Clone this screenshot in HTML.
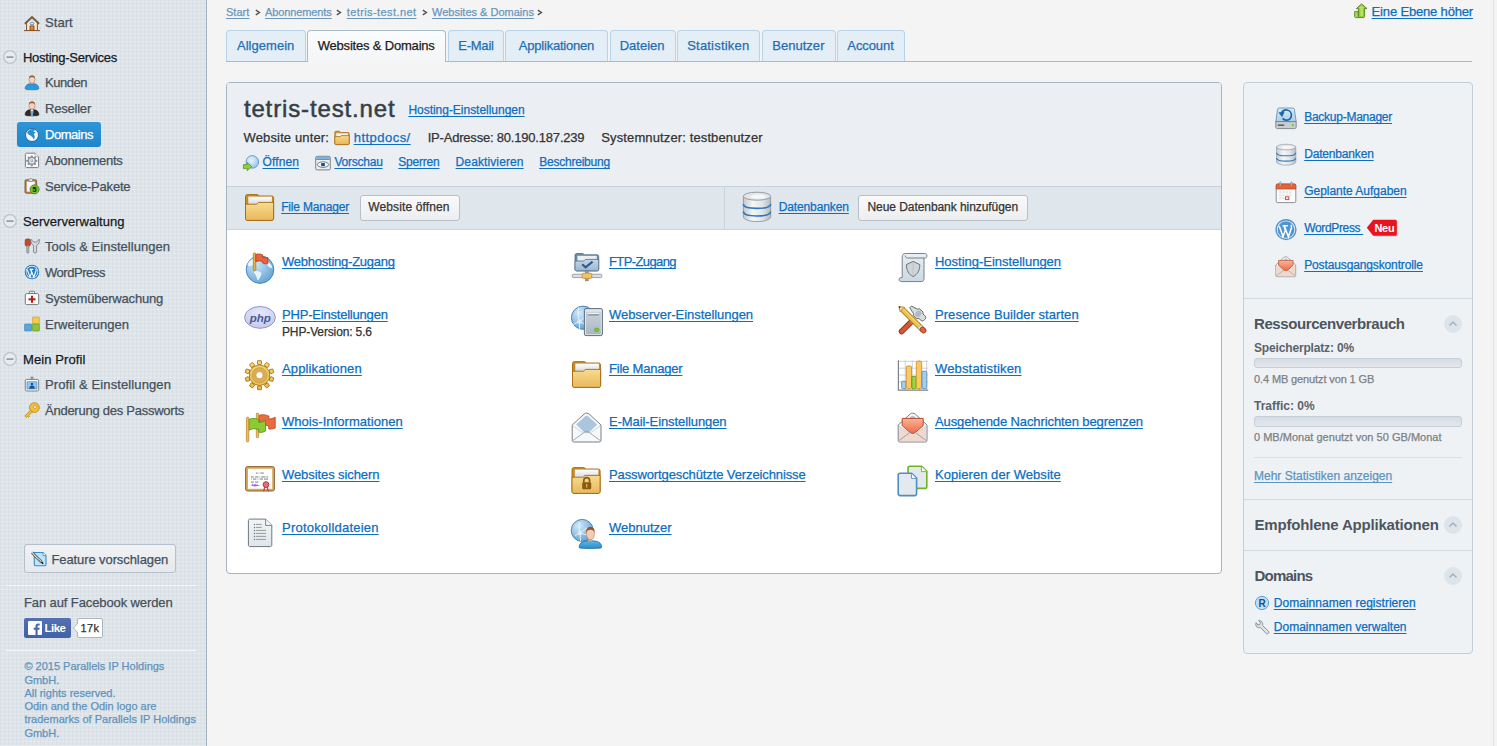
<!DOCTYPE html>
<html><head><meta charset="utf-8"><style>
html,body{margin:0;padding:0;}
body{width:1497px;height:746px;overflow:hidden;position:relative;background:#f4f4f4;font-family:"Liberation Sans",sans-serif;}
.t{position:absolute;white-space:nowrap;line-height:1;-webkit-text-stroke:0.25px;text-underline-offset:1.5px;text-decoration-skip-ink:none;}
.r{position:absolute;}
.ic16{position:absolute;width:16px;height:16px;}
.ic22{position:absolute;width:22px;height:22px;}
.ic32{position:absolute;width:32px;height:32px;}
.ic16 svg,.ic22 svg,.ic32 svg{display:block;overflow:visible;}
</style></head><body>
<div class="r" style="left:0px;top:0px;width:206px;height:746px;background-color:#dee4e8;background-image:repeating-linear-gradient(0deg,rgba(255,255,255,0.22) 0 1px,transparent 1px 4px),repeating-linear-gradient(90deg,rgba(160,175,190,0.10) 0 1px,transparent 1px 4px);"></div>
<div class="r" style="left:206px;top:0px;width:1px;height:746px;background:#a3b2bf;"></div>
<div class="t" style="left:45.0px;top:16.20px;font-size:13px;color:#44505b;letter-spacing:0.069px;">Start</div>
<div class="ic16" style="left:24px;top:14.5px"><svg width="16" height="16" viewBox="0 0 16 16">
<rect x="2.2" y="7" width="11.6" height="8.2" fill="#fbf1da"/>
<path d="M2.6 7.5V15M13.4 7.5V15" stroke="#7d5b3d" stroke-width="1.1"/>
<path d="M8 0.8 L0.2 8 L1.6 9.4 L8 3.4 L14.4 9.4 L15.8 8 Z" fill="#7d5b3d"/>
<rect x="0" y="15" width="16" height="1.1" fill="#7d5b3d"/>
<rect x="6.2" y="7.6" width="3.6" height="2.2" rx="1" fill="#fff" stroke="#3f7db8" stroke-width="1"/>
<rect x="6" y="11" width="4" height="4.2" fill="#d7932e" stroke="#9a3d10" stroke-width="0.9"/>
</svg></div>
<svg class="r" style="left:3px;top:50px" width="14" height="14"><circle cx="7" cy="7" r="6.3" fill="#e6ebef" stroke="#b8c3cc" stroke-width="1.2"/><rect x="3.5" y="6.3" width="7" height="1.6" fill="#8c98a3"/></svg>
<div class="t" style="left:23.0px;top:51.00px;font-size:13px;color:#15191d;letter-spacing:-0.266px;letter-spacing:-0.266px;">Hosting-Services</div>
<div class="t" style="left:45.0px;top:76.00px;font-size:13px;color:#44505b;letter-spacing:-0.470px;">Kunden</div>
<div class="ic16" style="left:24px;top:74px"><svg width="16" height="16" viewBox="0 0 16 16">
<path d="M1.2 14.5 C1.2 10.8 4.5 9.5 8 9.5 C11.5 9.5 14.8 10.8 14.8 14.5 C14.8 15.6 13.5 15.8 8 15.8 C2.5 15.8 1.2 15.6 1.2 14.5Z" fill="#2f97d6" stroke="#1d6fae" stroke-width="0.6"/>
<rect x="7" y="8" width="2" height="2" fill="#eab391"/>
<ellipse cx="8" cy="5.6" rx="3" ry="3.7" fill="#f6d3bd" stroke="#b87a55" stroke-width="0.6"/>
<path d="M5 4.8 C5 2 6.5 1.6 8 1.6 C9.5 1.6 11 2 11 4.8 C10.4 3.6 9.8 3.4 8 3.3 C6.3 3.4 5.6 3.6 5 4.8Z" fill="#9a5a2e"/>
</svg></div>
<div class="t" style="left:45.0px;top:102.00px;font-size:13px;color:#44505b;letter-spacing:-0.210px;">Reseller</div>
<div class="ic16" style="left:24px;top:100px"><svg width="16" height="16" viewBox="0 0 16 16">
<path d="M1.2 14.5 C1.2 10.8 4.5 9.5 8 9.5 C11.5 9.5 14.8 10.8 14.8 14.5 C14.8 15.6 13.5 15.8 8 15.8 C2.5 15.8 1.2 15.6 1.2 14.5Z" fill="#2b2b2b" stroke="#111" stroke-width="0.6"/>
<path d="M6.6 9.6 L9.4 9.6 L9 15.6 L7 15.6Z" fill="#fff"/>
<rect x="7.3" y="10.8" width="1.4" height="4.6" fill="#2f86c9"/>
<rect x="7" y="8" width="2" height="2" fill="#eab391"/>
<ellipse cx="8" cy="5.6" rx="3" ry="3.7" fill="#f6d3bd" stroke="#b87a55" stroke-width="0.6"/>
<path d="M5 4.8 C5 2 6.5 1.6 8 1.6 C9.5 1.6 11 2 11 4.8 C10.4 3.6 9.8 3.4 8 3.3 C6.3 3.4 5.6 3.6 5 4.8Z" fill="#9a5a2e"/>
</svg></div>
<div class="r" style="left:17px;top:122px;width:84px;height:25px;background:linear-gradient(#2f95d8,#1f86cc);border-radius:3px;"></div>
<div class="t" style="left:45.0px;top:128.00px;font-size:13px;color:#ffffff;letter-spacing:-0.471px;">Domains</div>
<div class="ic16" style="left:24px;top:126px"><svg width="16" height="16" viewBox="0 0 16 16">
<circle cx="8" cy="9" r="6.5" fill="#f4f9fd" stroke="#1f5f93" stroke-width="0.9"/>
<path d="M3.2 6.4 C4.5 4 7 2.9 10 3 C11.2 3.4 11.5 4.2 10.5 4.6 C9.5 4.9 9 5.6 10.2 6 C11.5 6.3 12.4 6.6 11 7.2 C9.8 7.6 9.6 8.4 10.4 9.2 C11 10.4 10.8 12 9.8 13.6 C9.2 12.4 8.6 11 7.6 10.6 C6.5 10 6.3 9 5.2 8.8 C4.2 8.6 3.6 7.6 3.2 6.4Z" fill="#2a8dd4"/>
</svg></div>
<div class="t" style="left:45.0px;top:154.00px;font-size:13px;color:#44505b;letter-spacing:-0.238px;">Abonnements</div>
<div class="ic16" style="left:24px;top:152px"><svg width="16" height="16" viewBox="0 0 16 16">
<path d="M1.4 2.4 C1.4 1.7 1.9 1.2 2.6 1.2 H11.2 L14.6 4.6 V14.4 C14.6 15.1 14.1 15.6 13.4 15.6 H2.6 C1.9 15.6 1.4 15.1 1.4 14.4Z" fill="#fafafa" stroke="#767e85" stroke-width="1"/>
<path d="M11.2 1.3 V4.6 H14.5" fill="#fff" stroke="#9aa1a7" stroke-width="0.7"/>
<g transform="translate(7.8 8.8)">
<g fill="#8a9197">
<rect x="-1.1" y="-5.4" width="2.2" height="10.8" rx="0.5"/>
<rect x="-1.1" y="-5.4" width="2.2" height="10.8" rx="0.5" transform="rotate(45)"/>
<rect x="-1.1" y="-5.4" width="2.2" height="10.8" rx="0.5" transform="rotate(90)"/>
<rect x="-1.1" y="-5.4" width="2.2" height="10.8" rx="0.5" transform="rotate(135)"/>
<circle r="4"/></g>
<circle r="2.8" fill="#e9ecee"/>
<circle r="1.4" fill="#8a9197"/>
<circle r="0.7" fill="#fafafa"/>
</g>
</svg></div>
<div class="t" style="left:45.0px;top:180.00px;font-size:13px;color:#44505b;letter-spacing:-0.196px;">Service-Pakete</div>
<div class="ic16" style="left:24px;top:178px"><svg width="16" height="16" viewBox="0 0 16 16">
<rect x="1" y="1.8" width="11.6" height="13.4" rx="1.2" fill="#c08a4c" stroke="#6f4a22" stroke-width="0.8"/>
<rect x="2.8" y="3.6" width="8" height="10" fill="#f7f9fb"/>
<rect x="4.8" y="0.8" width="4" height="2.6" rx="1" fill="#f2f2f2" stroke="#555" stroke-width="0.6"/>
<circle cx="10.6" cy="11.3" r="4.5" fill="#8cc63f" stroke="#3f7a12" stroke-width="0.8"/>
<circle cx="10.6" cy="11.3" r="3.2" fill="#6db02a"/>
<text x="10.6" y="13.9" font-size="7.2" font-weight="bold" text-anchor="middle" fill="#0f2a05" font-family="Liberation Sans">5</text>
</svg></div>
<svg class="r" style="left:3px;top:214px" width="14" height="14"><circle cx="7" cy="7" r="6.3" fill="#e6ebef" stroke="#b8c3cc" stroke-width="1.2"/><rect x="3.5" y="6.3" width="7" height="1.6" fill="#8c98a3"/></svg>
<div class="t" style="left:23.0px;top:215.20px;font-size:13px;color:#15191d;letter-spacing:0.022px;letter-spacing:0.022px;">Serververwaltung</div>
<div class="t" style="left:45.0px;top:240.30px;font-size:13px;color:#44505b;letter-spacing:0.034px;">Tools &amp; Einstellungen</div>
<div class="ic16" style="left:24px;top:238px"><svg width="16" height="16" viewBox="0 0 16 16">
<rect x="1.2" y="1" width="5.2" height="7" rx="1.6" fill="#c9482a" stroke="#7e2510" stroke-width="0.6"/>
<rect x="2.7" y="7.6" width="2.2" height="7.6" rx="0.8" fill="#a9b0b6" stroke="#6c747b" stroke-width="0.5"/>
<path d="M7 1.2 C6.4 4 7.4 6.6 9.6 7.4 V14 C9.6 15.4 12.6 15.4 12.6 14 V7.4 C14.8 6.6 15.8 4 15.2 1.2 L13.2 3.6 C12.4 4.2 9.8 4.2 9 3.6 Z" fill="#d5dadf" stroke="#6f787f" stroke-width="0.8"/>
</svg></div>
<div class="t" style="left:45.0px;top:266.00px;font-size:13px;color:#44505b;letter-spacing:-0.451px;">WordPress</div>
<div class="ic16" style="left:24px;top:264px"><svg width="16" height="16" viewBox="0 0 16 16">
<circle cx="8" cy="8" r="7.3" fill="#2a7ec2"/>
<circle cx="8" cy="8" r="6.2" fill="#fff"/>
<circle cx="8" cy="8" r="5.6" fill="#2a7ec2"/>
<path d="M3.2 5.6 L6 13 L7.6 8.6 L6.6 5.6 M6.9 5.6 L9.8 13.1 L12 7 C12.3 5.8 12 5.2 11.6 4.8 M5.6 5.4 H9.2" fill="none" stroke="#fff" stroke-width="1.1"/>
</svg></div>
<div class="t" style="left:45.0px;top:292.00px;font-size:13px;color:#44505b;letter-spacing:-0.200px;">Systemüberwachung</div>
<div class="ic16" style="left:24px;top:290px"><svg width="16" height="16" viewBox="0 0 16 16">
<rect x="5.4" y="1.2" width="5.2" height="2.6" rx="0.8" fill="none" stroke="#737b82" stroke-width="0.9"/>
<rect x="1.3" y="3.6" width="13.4" height="11" rx="1.4" fill="#fbfbfb" stroke="#737b82" stroke-width="1"/>
<rect x="7" y="5.8" width="2" height="7" fill="#b81d1d"/>
<rect x="4.5" y="8.3" width="7" height="2" fill="#b81d1d"/>
</svg></div>
<div class="t" style="left:45.0px;top:318.00px;font-size:13px;color:#44505b;letter-spacing:0.013px;">Erweiterungen</div>
<div class="ic16" style="left:24px;top:316px"><svg width="16" height="16" viewBox="0 0 16 16">
<rect x="0.6" y="8" width="7" height="7" rx="0.6" fill="#5aa5dd" stroke="#3e7eae" stroke-width="0.6"/>
<rect x="8.4" y="1" width="7" height="7" rx="0.6" fill="#f5c94a" stroke="#c99a25" stroke-width="0.6"/>
<rect x="8.4" y="8" width="7" height="7" rx="0.6" fill="#8cc43e" stroke="#5f9223" stroke-width="0.6"/>
</svg></div>
<svg class="r" style="left:3px;top:352px" width="14" height="14"><circle cx="7" cy="7" r="6.3" fill="#e6ebef" stroke="#b8c3cc" stroke-width="1.2"/><rect x="3.5" y="6.3" width="7" height="1.6" fill="#8c98a3"/></svg>
<div class="t" style="left:23.0px;top:352.70px;font-size:13px;color:#15191d;letter-spacing:0.099px;letter-spacing:0.099px;">Mein Profil</div>
<div class="t" style="left:45.0px;top:378.00px;font-size:13px;color:#44505b;letter-spacing:0.111px;">Profil &amp; Einstellungen</div>
<div class="ic16" style="left:24px;top:376px"><svg width="16" height="16" viewBox="0 0 16 16">
<rect x="6.6" y="0.6" width="2.8" height="3" fill="#8c949b"/>
<rect x="1.3" y="3.4" width="13.4" height="11.6" rx="1.6" fill="#fafafa" stroke="#7c848b" stroke-width="1"/>
<rect x="3" y="5.8" width="10" height="7.2" fill="#8cc7f0" stroke="#3a84c4" stroke-width="0.6"/>
<circle cx="8" cy="8" r="1.2" fill="#1f4e8c"/>
<path d="M5.3 12.8 C5.3 10.5 6.3 9.6 8 9.6 C9.7 9.6 10.7 10.5 10.7 12.8Z" fill="#1f4e8c"/>
</svg></div>
<div class="t" style="left:45.0px;top:404.00px;font-size:13px;color:#44505b;letter-spacing:-0.251px;">Änderung des Passworts</div>
<div class="ic16" style="left:24px;top:402px"><svg width="16" height="16" viewBox="0 0 16 16">
<circle cx="10.4" cy="5.6" r="4.9" fill="#f2bf3a" stroke="#b9831a" stroke-width="0.8"/>
<circle cx="11" cy="5" r="1.5" fill="#f2f2f2" stroke="#b9831a" stroke-width="0.6"/>
<path d="M6.6 8.2 L0.8 14 L2.4 15.6 L3.6 14.4 L4.6 15.2 L5.6 14.2 L4.8 13.4 L8.6 9.6Z" fill="#f2bf3a" stroke="#b9831a" stroke-width="0.8"/>
</svg></div>
<div class="r" style="left:24px;top:544px;width:150px;height:27px;background:linear-gradient(#f0f2f4,#e6e9ec);border:1px solid #b3bfc9;border-radius:3px;"></div>
<div class="t" style="left:51.4px;top:552.50px;font-size:13px;color:#44505b;letter-spacing:-0.090px;">Feature vorschlagen</div>
<div class="ic16" style="left:31px;top:551px"><svg width="16" height="16" viewBox="0 0 16 16">
<path d="M3.3 1.5 H12 L15 4.5 V13.4 C15 14.3 14.4 14.8 13.6 14.8 H4.6 C3.8 14.8 3.3 14.3 3.3 13.4Z" fill="#bfe3fb" stroke="#3b8cc9" stroke-width="1.1"/>
<path d="M12 1.6 V4.6 H15" fill="#fff" stroke="#3b8cc9" stroke-width="0.8"/>
<path d="M1 1.5 L10.6 11.2" stroke="#55595e" stroke-width="3"/>
<path d="M1 1.5 L10.6 11.2" stroke="#f4f4f4" stroke-width="1.6" stroke-dasharray="1 0.6"/>
<path d="M10.3 10.9 L12.2 12.8" stroke="#111" stroke-width="1.4"/>
</svg></div>
<div class="r" style="left:6px;top:585px;width:190px;height:1px;background:#f6f8fa;"></div>
<div class="t" style="left:24.0px;top:596.20px;font-size:13px;color:#44505b;letter-spacing:-0.110px;">Fan auf Facebook werden</div>
<div class="r" style="left:24px;top:618px;width:47px;height:20px;background:linear-gradient(#5370b3,#4162a6);border-radius:2px;"></div>
<svg class="r" style="left:28px;top:621px" width="14" height="14"><rect width="14" height="14" rx="1" fill="#fff"/><path d="M9.6 14V8.8h1.8l.3-2H9.6V5.5c0-.6.2-1 1-1h1.1V2.7c-.2 0-.9-.1-1.6-.1-1.6 0-2.6 1-2.6 2.7v1.5H5.7v2h1.8V14z" fill="#4a67ab"/></svg>
<div class="t" style="left:44.5px;top:622.77px;font-size:11.5px;color:#fff;letter-spacing:-0.503px;font-weight:bold;-webkit-text-stroke:0;">Like</div>
<div class="r" style="left:77px;top:618px;width:24px;height:18px;background:#fff;border:1px solid #aeb6bf;border-radius:2px;"></div>
<svg class="r" style="left:73px;top:623px" width="6" height="10"><path d="M5 0 L0.5 5 L5 10" fill="#fff" stroke="#aeb6bf"/></svg>
<div class="t" style="left:80.5px;top:622.99px;font-size:11px;color:#333;letter-spacing:0.422px;">17k</div>
<div class="r" style="left:6px;top:650px;width:190px;height:1px;background:#f6f8fa;"></div>
<div class="t" style="left:24.4px;top:661.49px;font-size:11px;color:#5f93bd;">© 2015 Parallels IP Holdings</div>
<div class="t" style="left:24.4px;top:674.59px;font-size:11px;color:#5f93bd;">GmbH.</div>
<div class="t" style="left:24.4px;top:687.89px;font-size:11px;color:#5f93bd;">All rights reserved.</div>
<div class="t" style="left:24.4px;top:701.09px;font-size:11px;color:#5f93bd;">Odin and the Odin logo are</div>
<div class="t" style="left:24.4px;top:714.49px;font-size:11px;color:#5f93bd;">trademarks of Parallels IP Holdings</div>
<div class="t" style="left:24.4px;top:727.69px;font-size:11px;color:#5f93bd;">GmbH.</div>
<div class="t" style="left:226.0px;top:6.69px;font-size:11px;color:#6a97bb;letter-spacing:0.034px;text-decoration:underline;">Start</div>
<svg class="r" style="left:254.5px;top:9px" width="6" height="7"><path d="M0.8 1.2 L4.4 3.5 L0.8 5.8" fill="none" stroke="#505050" stroke-width="1.4"/></svg>
<div class="t" style="left:265.0px;top:6.69px;font-size:11px;color:#6a97bb;letter-spacing:-0.107px;text-decoration:underline;">Abonnements</div>
<svg class="r" style="left:335.9px;top:9px" width="6" height="7"><path d="M0.8 1.2 L4.4 3.5 L0.8 5.8" fill="none" stroke="#505050" stroke-width="1.4"/></svg>
<div class="t" style="left:346.7px;top:6.69px;font-size:11px;color:#6a97bb;letter-spacing:0.415px;text-decoration:underline;">tetris-test.net</div>
<svg class="r" style="left:421.8px;top:9px" width="6" height="7"><path d="M0.8 1.2 L4.4 3.5 L0.8 5.8" fill="none" stroke="#505050" stroke-width="1.4"/></svg>
<div class="t" style="left:432.0px;top:6.69px;font-size:11px;color:#6a97bb;text-decoration:underline;">Websites &amp; Domains</div>
<svg class="r" style="left:537.0px;top:9px" width="6" height="7"><path d="M0.8 1.2 L4.4 3.5 L0.8 5.8" fill="none" stroke="#505050" stroke-width="1.4"/></svg>
<div class="ic16" style="left:1353px;top:3px"><svg width="16" height="16" viewBox="0 0 16 16">
<path d="M1.6 8.6 H5.4 V14.6 H2.6 C2 14.6 1.6 14.2 1.6 13.6Z" fill="#a6d65a" stroke="#557f1c" stroke-width="0.8"/>
<path d="M8.5 0.9 L14 5.6 H11.6 V13.4 C11.6 14.1 11.1 14.6 10.4 14.6 H5.4 V5.6 H3.4Z" fill="#93cb3a" stroke="#557f1c" stroke-width="0.9"/>
<path d="M8.5 2.5 L11.2 5 H9.8 V13 H7.4 V5 H6 Z" fill="#b9e46c"/>
</svg></div>
<div class="t" style="left:1371.6px;top:5.10px;font-size:13px;color:#0b6ec1;letter-spacing:-0.167px;text-decoration:underline;">Eine Ebene höher</div>
<div class="r" style="left:226px;top:61px;width:1246px;height:1px;background:#a9bbc9;"></div>
<div class="r" style="left:226px;top:30px;width:78px;height:30px;background:#e4eef6;border:1px solid #b8d2e8;border-bottom:none;border-radius:4px 4px 0 0;"></div>
<div class="t" style="left:237.0px;top:39.40px;font-size:13px;color:#1f6db3;letter-spacing:0.024px;">Allgemein</div>
<div class="r" style="left:307px;top:30px;width:137px;height:31px;background:linear-gradient(#fbfcfd,#f4f5f6);border:1px solid #a9bbc9;border-bottom:none;border-radius:4px 4px 0 0;"></div>
<div class="t" style="left:317.7px;top:39.40px;font-size:13px;color:#1d1d1d;letter-spacing:-0.190px;">Websites &amp; Domains</div>
<div class="r" style="left:448px;top:30px;width:54px;height:30px;background:#e4eef6;border:1px solid #b8d2e8;border-bottom:none;border-radius:4px 4px 0 0;"></div>
<div class="t" style="left:458.2px;top:39.40px;font-size:13px;color:#1f6db3;letter-spacing:-0.215px;">E-Mail</div>
<div class="r" style="left:505px;top:30px;width:101px;height:30px;background:#e4eef6;border:1px solid #b8d2e8;border-bottom:none;border-radius:4px 4px 0 0;"></div>
<div class="t" style="left:518.8px;top:39.40px;font-size:13px;color:#1f6db3;letter-spacing:-0.210px;">Applikationen</div>
<div class="r" style="left:610px;top:30px;width:64px;height:30px;background:#e4eef6;border:1px solid #b8d2e8;border-bottom:none;border-radius:4px 4px 0 0;"></div>
<div class="t" style="left:619.7px;top:39.40px;font-size:13px;color:#1f6db3;letter-spacing:-0.001px;">Dateien</div>
<div class="r" style="left:677px;top:30px;width:81px;height:30px;background:#e4eef6;border:1px solid #b8d2e8;border-bottom:none;border-radius:4px 4px 0 0;"></div>
<div class="t" style="left:687.2px;top:39.40px;font-size:13px;color:#1f6db3;letter-spacing:0.203px;">Statistiken</div>
<div class="r" style="left:762px;top:30px;width:72px;height:30px;background:#e4eef6;border:1px solid #b8d2e8;border-bottom:none;border-radius:4px 4px 0 0;"></div>
<div class="t" style="left:772.2px;top:39.40px;font-size:13px;color:#1f6db3;letter-spacing:0.034px;">Benutzer</div>
<div class="r" style="left:837px;top:30px;width:66px;height:30px;background:#e4eef6;border:1px solid #b8d2e8;border-bottom:none;border-radius:4px 4px 0 0;"></div>
<div class="t" style="left:847.3px;top:39.40px;font-size:13px;color:#1f6db3;letter-spacing:-0.082px;">Account</div>
<div class="r" style="left:226px;top:82px;width:994px;height:490px;background:#fff;border:1px solid #a5b4c0;border-radius:4px;overflow:hidden;"></div>
<div class="r" style="left:227px;top:83px;width:994px;height:103px;background:#ebeff3;border-radius:3px 3px 0 0;"></div>
<div class="r" style="left:227px;top:186px;width:994px;height:1px;background:#c9d3db;"></div>
<div class="r" style="left:227px;top:187px;width:994px;height:42px;background:#dfe6ec;"></div>
<div class="r" style="left:227px;top:229px;width:994px;height:1px;background:#cbd4dc;"></div>
<div class="r" style="left:724px;top:187px;width:1px;height:42px;background:#c9d3db;"></div>
<div class="t" style="left:243.9px;top:96.58px;font-size:24px;color:#353e47;letter-spacing:0.858px;-webkit-text-stroke:0.5px;">tetris-test.net</div>
<div class="t" style="left:408.4px;top:104.14px;font-size:12px;color:#0b6ec1;letter-spacing:-0.025px;text-decoration:underline;">Hosting-Einstellungen</div>
<div class="t" style="left:243.6px;top:130.60px;font-size:13px;color:#333;letter-spacing:0.130px;">Website unter:</div>
<div class="ic16" style="left:334px;top:130px"><svg width="16" height="16" viewBox="0 0 16 16"><defs><linearGradient id="gfold" x1="0" y1="0" x2="0" y2="1"><stop offset="0" stop-color="#f6d98a"/><stop offset="1" stop-color="#e7b659"/></linearGradient></defs>
<path d="M0.8 2.4 C0.8 1.7 1.2 1.3 1.9 1.3 H5.6 L6.5 2.5 H14 C14.7 2.5 15.2 2.9 15.2 3.6 V13.4 C15.2 14.1 14.7 14.6 14 14.6 H2 C1.3 14.6 0.8 14.1 0.8 13.4Z" fill="#d39b3a" stroke="#a86f16" stroke-width="0.8"/>
<rect x="2.2" y="3.3" width="11.8" height="4.5" fill="#eef1f4"/>
<path d="M0.8 6.6 H6.4 L7.2 5.6 H15.2 V13.4 C15.2 14.1 14.7 14.6 14 14.6 H2 C1.3 14.6 0.8 14.1 0.8 13.4Z" fill="url(#gfold)" stroke="#a86f16" stroke-width="0.8"/>
</svg></div>
<div class="t" style="left:353.7px;top:130.60px;font-size:13px;color:#0b6ec1;letter-spacing:0.472px;text-decoration:underline;">httpdocs/</div>
<div class="t" style="left:427.7px;top:130.60px;font-size:13px;color:#333;letter-spacing:-0.200px;">IP-Adresse: 80.190.187.239</div>
<div class="t" style="left:601.3px;top:130.60px;font-size:13px;color:#333;letter-spacing:0.121px;">Systemnutzer: testbenutzer</div>
<div class="ic16" style="left:243px;top:155px"><svg width="16" height="16" viewBox="0 0 16 16">
<defs><radialGradient id="gglob" cx="0.4" cy="0.35" r="0.7"><stop offset="0" stop-color="#e9f5fd"/><stop offset="1" stop-color="#8fc3e9"/></radialGradient></defs>
<circle cx="9.3" cy="6.9" r="6.3" fill="url(#gglob)" stroke="#4f8fc2" stroke-width="0.8"/>
<path d="M7 4.5 C8.5 3.8 10.5 4 11.5 5 M8.5 8 C9.5 7.6 11 7.8 12 8.5" stroke="#cfe6f6" stroke-width="0.8" fill="none"/>
<path d="M0.4 9.6 H4.2 V7.4 L8.8 11.6 L4.2 15.8 V13.6 H0.4Z" fill="#8fcf37" stroke="#4f8a1c" stroke-width="0.7"/>
</svg></div>
<div class="t" style="left:262.5px;top:155.64px;font-size:12px;color:#0b6ec1;letter-spacing:0.116px;text-decoration:underline;">Öffnen</div>
<div class="ic16" style="left:315px;top:155px"><svg width="16" height="16" viewBox="0 0 16 16">
<rect x="0.7" y="1.3" width="14.6" height="13.6" rx="1.4" fill="#eceff2" stroke="#6e767d" stroke-width="0.9"/>
<rect x="1.3" y="1.8" width="13.4" height="2.4" fill="#74b4e6"/>
<rect x="1.3" y="4.2" width="13.4" height="0.8" fill="#6e767d"/>
<ellipse cx="8" cy="9.6" rx="5.6" ry="2.8" fill="#f8f8f8" stroke="#5b636a" stroke-width="0.8"/>
<rect x="6" y="8" width="4" height="3.2" fill="#2f6fb0"/>
<rect x="7.2" y="8.8" width="1.6" height="1.6" fill="#1a2f4a"/>
</svg></div>
<div class="t" style="left:334.4px;top:155.64px;font-size:12px;color:#0b6ec1;letter-spacing:-0.229px;text-decoration:underline;">Vorschau</div>
<div class="t" style="left:398.3px;top:155.64px;font-size:12px;color:#0b6ec1;letter-spacing:-0.213px;text-decoration:underline;">Sperren</div>
<div class="t" style="left:455.6px;top:155.64px;font-size:12px;color:#0b6ec1;letter-spacing:0.109px;text-decoration:underline;">Deaktivieren</div>
<div class="t" style="left:539.2px;top:155.64px;font-size:12px;color:#0b6ec1;letter-spacing:-0.223px;text-decoration:underline;">Beschreibung</div>
<div class="ic32" style="left:244px;top:192px"><svg width="32" height="32" viewBox="0 0 32 32"><defs><linearGradient id="gfold32" x1="0" y1="0" x2="0" y2="1"><stop offset="0" stop-color="#f7dc8e"/><stop offset="1" stop-color="#e8b85e"/></linearGradient>
<linearGradient id="gpap" x1="0" y1="0" x2="0" y2="1"><stop offset="0" stop-color="#ffffff"/><stop offset="1" stop-color="#c9cfd6"/></linearGradient></defs>
<path d="M1.5 4.6 C1.5 3.4 2.3 2.6 3.4 2.6 H13.2 C14.2 2.6 14.8 3.4 14.8 4 H27.6 C28.8 4 29.6 4.8 29.6 6 V26.4 C29.6 27.6 28.8 28.4 27.6 28.4 H3.4 C2.3 28.4 1.5 27.6 1.5 26.4Z" fill="#c98a1f" stroke="#a46810" stroke-width="0.9"/>
<rect x="4.3" y="4.6" width="23.6" height="10" fill="url(#gpap)"/>
<path d="M1.5 12.2 H12.6 C13.4 12.2 13.6 10.4 14.6 10.4 H29.6 V26.4 C29.6 27.6 28.8 28.4 27.6 28.4 H3.4 C2.3 28.4 1.5 27.6 1.5 26.4Z" fill="url(#gfold32)" stroke="#a46810" stroke-width="0.9"/>
</svg></div>
<div class="t" style="left:281.2px;top:201.14px;font-size:12px;color:#0b6ec1;letter-spacing:-0.186px;text-decoration:underline;">File Manager</div>
<div class="r" style="left:360px;top:195px;width:98px;height:24px;background:linear-gradient(#fafafa,#eceef0);border:1px solid #b7c0c8;border-radius:3px;"></div>
<div class="t" style="left:368.3px;top:201.14px;font-size:12px;color:#333;letter-spacing:0.121px;">Website öffnen</div>
<div class="ic32" style="left:741px;top:191px"><svg width="32" height="32" viewBox="0 0 32 32">
<defs><linearGradient id="gdb" x1="0" y1="0" x2="1" y2="0"><stop offset="0" stop-color="#c4c9ce"/><stop offset="0.35" stop-color="#f4f6f8"/><stop offset="0.7" stop-color="#e1e5e9"/><stop offset="1" stop-color="#b4babf"/></linearGradient></defs>
<path d="M2.4 5.2 V25.8 C2.4 28.6 8.6 30.6 16 30.6 C23.4 30.6 29.6 28.6 29.6 25.8 V6Z" fill="url(#gdb)" stroke="#8f969c" stroke-width="0.9"/>
<ellipse cx="16" cy="5.2" rx="13.6" ry="4" fill="#e3e6e9" stroke="#8f969c" stroke-width="0.9"/>
<ellipse cx="17" cy="5.6" rx="8" ry="2" fill="#f6f7f8"/>
<path d="M2.4 13 C2.4 16 8.6 17.4 16 17.4 C23.4 17.4 29.6 16 29.6 13" fill="none" stroke="#2f78b8" stroke-width="1.6"/>
<path d="M2.4 20.6 C2.4 23.6 8.6 25 16 25 C23.4 25 29.6 23.6 29.6 20.6" fill="none" stroke="#2f78b8" stroke-width="1.6"/>
</svg></div>
<div class="t" style="left:778.7px;top:201.14px;font-size:12px;color:#0b6ec1;letter-spacing:-0.117px;text-decoration:underline;">Datenbanken</div>
<div class="r" style="left:858px;top:195px;width:168px;height:24px;background:linear-gradient(#fafafa,#eceef0);border:1px solid #b7c0c8;border-radius:3px;"></div>
<div class="t" style="left:867.5px;top:201.14px;font-size:12px;color:#333;letter-spacing:-0.064px;">Neue Datenbank hinzufügen</div>
<div class="t" style="left:282.0px;top:255.30px;font-size:13px;color:#0b6ec1;letter-spacing:-0.237px;text-decoration:underline;">Webhosting-Zugang</div>
<div class="ic32" style="left:244px;top:252px"><svg width="32" height="32" viewBox="0 0 32 32">
<defs><radialGradient id="gw1" cx="0.35" cy="0.3" r="0.8"><stop offset="0" stop-color="#c8e6fb"/><stop offset="1" stop-color="#5e9fd3"/></radialGradient></defs>
<circle cx="16" cy="17.6" r="13.8" fill="url(#gw1)" stroke="#3f7fb5" stroke-width="0.9"/>
<path d="M3.6 12.5 C5 9 8 6.5 10.5 6 L12 10 C10 12 8 14 5 14.5Z M22 9 C25 10 28 13 28.5 16 C26.5 16.5 24.5 15 23.5 13 C22.5 12 21.5 10.5 22 9Z M10 19.5 C13 18.5 16 19.5 17.5 21 C17 24 15.5 26.5 14 28.5 C12.5 27 12.5 24 11.5 22.5 C10.5 21.5 9.5 20.5 10 19.5Z" fill="#f2f8fd" opacity="0.9"/>
<rect x="9.3" y="1" width="2.5" height="17.8" rx="1.1" fill="#e6b44a" stroke="#a8700f" stroke-width="0.7"/>
<path d="M11.8 2.4 C14.5 1.6 17 2 18.6 2.8 V5.6 H23.9 V11.6 C22 12 20.3 11.8 18.6 11 V9.4 C16.4 8.6 14 8.8 11.8 9.6Z" fill="#e8643a" stroke="#b03e17" stroke-width="0.8"/>
</svg></div>
<div class="t" style="left:609.0px;top:255.30px;font-size:13px;color:#0b6ec1;letter-spacing:-0.597px;text-decoration:underline;">FTP-Zugang</div>
<div class="ic32" style="left:571px;top:252px"><svg width="32" height="32" viewBox="0 0 32 32">
<defs><linearGradient id="gftp" x1="0" y1="0" x2="0" y2="1"><stop offset="0" stop-color="#c6d8e8"/><stop offset="1" stop-color="#9db7ce"/></linearGradient></defs>
<path d="M4 3.2 C4 2.2 4.7 1.5 5.7 1.5 H11.6 C12.4 1.5 12.8 2.2 12.8 2.8 H26 C27 2.8 27.7 3.5 27.7 4.5 V17.2 C27.7 18.2 27 18.9 26 18.9 H5.7 C4.7 18.9 4 18.2 4 17.2Z" fill="#6b8aa6" stroke="#4e6b86" stroke-width="0.8"/>
<rect x="6.4" y="3.8" width="19.4" height="6.2" fill="#eceff2"/>
<path d="M4 9 H12.8 C13.6 9 13.8 7.4 14.8 7.4 H27.7 V17.2 C27.7 18.2 27 18.9 26 18.9 H5.7 C4.7 18.9 4 18.2 4 17.2Z" fill="url(#gftp)" stroke="#4e6b86" stroke-width="0.8"/>
<path d="M11.2 12.2 L14.6 15.4 L21.6 9.6" fill="none" stroke="#2c5b98" stroke-width="2.2"/>
<rect x="14.6" y="18.8" width="2.6" height="10" fill="#9aa1a8" stroke="#6c7379" stroke-width="0.6"/>
<rect x="1.2" y="22.2" width="29.6" height="3.4" rx="1" fill="#dcdfe2" stroke="#7b8288" stroke-width="0.7"/>
<rect x="11.2" y="21.2" width="9.6" height="5.2" rx="1.4" fill="#f1c46a" stroke="#c38a2a" stroke-width="0.8"/>
</svg></div>
<div class="t" style="left:935.0px;top:255.30px;font-size:13px;color:#0b6ec1;letter-spacing:-0.022px;text-decoration:underline;">Hosting-Einstellungen</div>
<div class="ic32" style="left:897px;top:252px"><svg width="32" height="32" viewBox="0 0 32 32">
<defs><linearGradient id="ghs" x1="0" y1="0" x2="0" y2="1"><stop offset="0" stop-color="#e9f0f5"/><stop offset="1" stop-color="#c9d8e2"/></linearGradient></defs>
<path d="M5.2 5 C5.2 2.6 6.4 1.5 8.4 1.5 H27.6 C29.2 1.5 29.9 2.4 29.9 3.8 C29.9 5.2 29.2 6 27.6 6 H27 V26.4 C27 28.4 26 29.6 24.2 29.6 H4.2 C2.8 29.6 2.1 28.8 2.1 27.6 C2.1 26.4 2.8 25.6 4.2 25.6 H5.2Z" fill="url(#ghs)" stroke="#6c757c" stroke-width="0.9"/>
<path d="M8.2 3.5 C8.6 5.5 9.4 6 10.4 6 H27" fill="none" stroke="#6c757c" stroke-width="0.9"/>
<path d="M9.4 12.6 C11.8 11.6 13.8 10.4 16.1 9.3 C18.4 10.4 20.4 11.6 22.8 12.6 C22.8 18.6 20.4 22.4 16.1 24.6 C11.8 22.4 9.4 18.6 9.4 12.6Z" fill="#d2d5d8" stroke="#6c7278" stroke-width="1"/>
<path d="M16.1 9.6 V24.3" stroke="#b9bdc1" stroke-width="0.8"/>
</svg></div>
<div class="t" style="left:282.0px;top:308.00px;font-size:13px;color:#0b6ec1;letter-spacing:-0.201px;text-decoration:underline;">PHP-Einstellungen</div>
<div class="ic32" style="left:244px;top:305px"><svg width="32" height="32" viewBox="0 0 32 32">
<defs><radialGradient id="gphp" cx="0.5" cy="0.3" r="0.7"><stop offset="0" stop-color="#e6e8fb"/><stop offset="1" stop-color="#c5c9ee"/></radialGradient></defs>
<ellipse cx="16" cy="12.4" rx="15.4" ry="10.9" fill="url(#gphp)" stroke="#8a8fc0" stroke-width="0.9"/>
<text x="16.2" y="16.6" font-size="11.5" font-style="italic" font-weight="bold" text-anchor="middle" fill="#4d5a93" font-family="Liberation Sans">php</text>
</svg></div>
<div class="t" style="left:609.0px;top:308.00px;font-size:13px;color:#0b6ec1;letter-spacing:-0.043px;text-decoration:underline;">Webserver-Einstellungen</div>
<div class="ic32" style="left:571px;top:305px"><svg width="32" height="32" viewBox="0 0 32 32">
<defs><radialGradient id="gws" cx="0.35" cy="0.3" r="0.8"><stop offset="0" stop-color="#d4ebfb"/><stop offset="1" stop-color="#5b9bd0"/></radialGradient>
<linearGradient id="gsrv" x1="0" y1="0" x2="0" y2="1"><stop offset="0" stop-color="#c9d3dc"/><stop offset="1" stop-color="#a9b6c2"/></linearGradient></defs>
<circle cx="12" cy="12.7" r="11.6" fill="url(#gws)" stroke="#3f7fb5" stroke-width="0.9"/>
<path d="M7.6 2.4 C6.5 7 7.2 13 8.4 16.6 M8.4 16.6 L2.2 19.5 M8.4 16.6 L8.6 24 M8.4 16.6 L15 11.5 M8.4 16.6 L14.5 19.5" stroke="#eaf4fc" stroke-width="0.9" fill="none"/>
<circle cx="8.4" cy="16.6" r="1.8" fill="none" stroke="#eaf4fc" stroke-width="0.9"/>
<rect x="13.4" y="3.6" width="18" height="27" rx="1.6" fill="#dfe5ea" stroke="#5f6d79" stroke-width="1"/>
<rect x="15" y="6.8" width="14.8" height="22.4" fill="url(#gsrv)"/>
<rect x="16.8" y="9.2" width="11" height="1.2" fill="#69777f"/>
<rect x="16.8" y="8.2" width="11" height="1" fill="#fbfcfd"/>
<rect x="23.6" y="23.2" width="4.2" height="3.2" rx="1.4" fill="#6fcf2e" stroke="#3e9a14" stroke-width="0.5"/>
</svg></div>
<div class="t" style="left:935.0px;top:308.00px;font-size:13px;color:#0b6ec1;letter-spacing:0.056px;text-decoration:underline;">Presence Builder starten</div>
<div class="ic32" style="left:897px;top:305px"><svg width="32" height="32" viewBox="0 0 32 32">
<g transform="rotate(42 21 8.6)"><path d="M11 7.4 L17.6 5.6 L19 4 H23.6 L25 5.6 H28 C29.4 5.6 30 6.8 30 8.6 C30 10.4 29.4 11.6 28 11.6 H25 L23.6 13.2 H19 L17.6 11.6 L11 9.8 Z" fill="#d9dde0" stroke="#60686e" stroke-width="0.9"/>
<ellipse cx="21.3" cy="8.6" rx="2.8" ry="3.4" fill="#b3b9bd"/></g>
<path d="M4.6 26.6 L13.6 17.6" stroke="#8b2c14" stroke-width="5.6" stroke-linecap="round"/>
<path d="M4.6 26.6 L13.6 17.6" stroke="#cf5a33" stroke-width="4" stroke-linecap="round"/>
<path d="M13.6 17.6 L15.6 15.6" stroke="#9aa2a8" stroke-width="3"/>
<path d="M5.2 4.2 L23 22" stroke="#a8740f" stroke-width="5.6"/>
<path d="M5.2 4.2 L23 22" stroke="#f0c24f" stroke-width="4"/>
<path d="M5.6 3.2 L22.6 20.4" stroke="#f8dc8a" stroke-width="1"/>
<path d="M1.8 1.4 L7.4 2.2 L3 6.6Z" fill="#f2d49a" stroke="#a8740f" stroke-width="0.7"/>
<path d="M1.8 1.4 L3.8 1.7 L2.1 3.4Z" fill="#222"/>
<path d="M22.6 21.6 L25.4 24.4" stroke="#8e959b" stroke-width="5.6"/>
<path d="M22.6 21.6 L25.4 24.4" stroke="#eef0f2" stroke-width="4"/>
<path d="M25.4 24.4 L26.6 25.6" stroke="#9c3a1c" stroke-width="5.6" stroke-linecap="round"/>
<path d="M25.4 24.4 L26.6 25.6" stroke="#e3653d" stroke-width="4" stroke-linecap="round"/>
</svg></div>
<div class="t" style="left:282.0px;top:362.00px;font-size:13px;color:#0b6ec1;letter-spacing:0.134px;text-decoration:underline;">Applikationen</div>
<div class="ic32" style="left:244px;top:359px"><svg width="32" height="32" viewBox="0 0 32 32">
<defs><linearGradient id="gap" x1="0" y1="0" x2="0" y2="1"><stop offset="0" stop-color="#f6dc7e"/><stop offset="1" stop-color="#e9b748"/></linearGradient></defs>
<path d="M17.68 5.01 L17.28 1.71 L13.72 1.71 L13.32 5.01 L23.84 8.43 L25.46 5.52 L22.58 3.43 L20.32 5.87 L26.82 14.81 L29.83 13.41 L28.73 10.03 L25.47 10.67 L25.47 21.73 L28.73 22.37 L29.83 18.99 L26.82 17.59 L20.32 26.53 L22.58 28.97 L25.46 26.88 L23.84 23.97 L13.32 27.39 L13.72 30.69 L17.28 30.69 L17.68 27.39 L7.16 23.97 L5.54 26.88 L8.42 28.97 L10.68 26.53 L4.18 17.59 L1.17 18.99 L2.27 22.37 L5.53 21.73 L5.53 10.67 L2.27 10.03 L1.17 13.41 L4.18 14.81 L10.68 5.87 L8.42 3.43 L5.54 5.52 L7.16 8.43Z" fill="url(#gap)" stroke="#a97414" stroke-width="0.9" stroke-linejoin="round"/>
<circle cx="15.5" cy="16.2" r="7.6" fill="#dcae52" stroke="#c89636" stroke-width="0.6"/>
<circle cx="15.5" cy="16.2" r="3.6" fill="#ffffff" stroke="#b58224" stroke-width="0.6"/>
</svg></div>
<div class="t" style="left:609.0px;top:362.00px;font-size:13px;color:#0b6ec1;letter-spacing:-0.205px;text-decoration:underline;">File Manager</div>
<div class="ic32" style="left:571px;top:359px"><svg width="32" height="32" viewBox="0 0 32 32"><defs><linearGradient id="gfold32" x1="0" y1="0" x2="0" y2="1"><stop offset="0" stop-color="#f7dc8e"/><stop offset="1" stop-color="#e8b85e"/></linearGradient>
<linearGradient id="gpap" x1="0" y1="0" x2="0" y2="1"><stop offset="0" stop-color="#ffffff"/><stop offset="1" stop-color="#c9cfd6"/></linearGradient></defs>
<path d="M1.5 4.6 C1.5 3.4 2.3 2.6 3.4 2.6 H13.2 C14.2 2.6 14.8 3.4 14.8 4 H27.6 C28.8 4 29.6 4.8 29.6 6 V26.4 C29.6 27.6 28.8 28.4 27.6 28.4 H3.4 C2.3 28.4 1.5 27.6 1.5 26.4Z" fill="#c98a1f" stroke="#a46810" stroke-width="0.9"/>
<rect x="4.3" y="4.6" width="23.6" height="10" fill="url(#gpap)"/>
<path d="M1.5 12.2 H12.6 C13.4 12.2 13.6 10.4 14.6 10.4 H29.6 V26.4 C29.6 27.6 28.8 28.4 27.6 28.4 H3.4 C2.3 28.4 1.5 27.6 1.5 26.4Z" fill="url(#gfold32)" stroke="#a46810" stroke-width="0.9"/>
</svg></div>
<div class="t" style="left:935.0px;top:362.00px;font-size:13px;color:#0b6ec1;letter-spacing:0.157px;text-decoration:underline;">Webstatistiken</div>
<div class="ic32" style="left:897px;top:359px"><svg width="32" height="32" viewBox="0 0 32 32">
<g stroke="#c8cdd2" stroke-width="0.9"><path d="M1.2 2.3 H31 M1.2 9.2 H31 M1.2 16 H31 M1.2 22.9 H31 M8.2 1.3 V32 M15.3 1.3 V32 M22.4 1.3 V32 M29.6 1.3 V32"/></g>
<path d="M1.4 1.2 V31.2 H31.2" fill="none" stroke="#7c8389" stroke-width="1.2"/>
<rect x="4.6" y="22.2" width="4.4" height="7.4" rx="1" fill="#a8cdec" stroke="#4f86b8" stroke-width="0.8"/>
<rect x="9.3" y="7" width="5.2" height="22.6" rx="1.2" fill="#fbc964" stroke="#c98a1c" stroke-width="0.8"/>
<rect x="14.9" y="17.4" width="4.2" height="12.2" rx="0.8" fill="#9bd83c" stroke="#4c8d1a" stroke-width="0.8"/>
<rect x="19.3" y="2.2" width="5.4" height="27.4" rx="1.2" fill="#fbc964" stroke="#c98a1c" stroke-width="0.8"/>
<rect x="25" y="12.2" width="4.8" height="17.4" rx="1" fill="#a8cdec" stroke="#4f86b8" stroke-width="0.8"/>
</svg></div>
<div class="t" style="left:282.0px;top:415.00px;font-size:13px;color:#0b6ec1;letter-spacing:0.045px;text-decoration:underline;">Whois-Informationen</div>
<div class="ic32" style="left:244px;top:412px"><svg width="32" height="32" viewBox="0 0 32 32">
<path d="M14.7 3.8 C18 1.8 21 2.8 24.8 4 V7 C27 7 29 6.4 31.2 5.2 V16 C29 17 27 17.2 24.8 17 V14 C21 13 18 12.5 14.7 14.2Z" fill="#ea6b3f" stroke="#b13f18" stroke-width="0.8"/>
<rect x="12.3" y="1.1" width="2.4" height="24.7" rx="1.1" fill="#f0c057" stroke="#a8700f" stroke-width="0.6"/>
<path d="M4.8 7.6 C8.5 5.6 12 6.6 14.8 7.8 V10.6 C17 10 19.5 9.5 21.6 8.4 V19 C19 20.4 17 20.6 14.8 20.2 V17.4 C11 16.4 8 16.6 4.8 18.2Z" fill="#8bcc34" stroke="#4b8a16" stroke-width="0.8"/>
<rect x="2.4" y="5.2" width="2.4" height="24.7" rx="1.1" fill="#f0c057" stroke="#a8700f" stroke-width="0.6"/>
</svg></div>
<div class="t" style="left:609.0px;top:415.00px;font-size:13px;color:#0b6ec1;letter-spacing:-0.086px;text-decoration:underline;">E-Mail-Einstellungen</div>
<div class="ic32" style="left:571px;top:412px"><svg width="32" height="32" viewBox="0 0 32 32"><defs><linearGradient id="gred" x1="0" y1="0" x2="0" y2="1"><stop offset="0" stop-color="#fbb59b"/><stop offset="1" stop-color="#ec6b43"/></linearGradient></defs>
<path d="M1.2 13 L13.2 2 C14.5 0.9 16.9 0.9 18.2 2 L30 13 V28.4 C30 29.4 29.3 30 28.3 30 H2.9 C1.9 30 1.2 29.4 1.2 28.4Z" fill="#f7f8f9" stroke="#7b8288" stroke-width="1"/>
<path d="M5.2 12.6 L14.2 4.2 C15 3.5 16.3 3.5 17.1 4.2 L26.2 12.6 L18 20.4 C16.5 21.6 14.8 21.6 13.4 20.4Z" fill="#a9c6de"/>

<path d="M1.6 28.8 L13.4 20.2 C14.8 19.2 16.4 19.2 17.8 20.2 L29.6 28.8" fill="none" stroke="#8d949a" stroke-width="0.8"/>
<path d="M1.6 13.6 L12 21 M29.6 13.6 L19.2 21" fill="none" stroke="#c2c7cb" stroke-width="0.7"/>
</svg></div>
<div class="t" style="left:935.0px;top:415.00px;font-size:13px;color:#0b6ec1;letter-spacing:-0.098px;text-decoration:underline;">Ausgehende Nachrichten begrenzen</div>
<div class="ic32" style="left:897px;top:412px"><svg width="32" height="32" viewBox="0 0 32 32"><defs><linearGradient id="gred" x1="0" y1="0" x2="0" y2="1"><stop offset="0" stop-color="#fbb59b"/><stop offset="1" stop-color="#ec6b43"/></linearGradient></defs>
<path d="M1.2 13 L13.2 2 C14.5 0.9 16.9 0.9 18.2 2 L30 13 V28.4 C30 29.4 29.3 30 28.3 30 H2.9 C1.9 30 1.2 29.4 1.2 28.4Z" fill="#f7f8f9" stroke="#7b8288" stroke-width="1"/>
<path d="M5.2 12.6 L14.2 4.2 C15 3.5 16.3 3.5 17.1 4.2 L26.2 12.6 L18 20.4 C16.5 21.6 14.8 21.6 13.4 20.4Z" fill="#a9c6de"/>
<path d="M2.1 14 L13.5 22 C14.8 22.9 16.4 22.9 17.7 22 L29.1 14 V29.2 H2.1Z" fill="#f0d8cf"/>
<path d="M5.2 6.4 H26.2 V13.6 L18.2 20.6 C16.4 21.8 14.9 21.8 13.2 20.6 L5.2 13.6Z" fill="url(#gred)" stroke="#b43a17" stroke-width="0.9"/>
<path d="M1.6 28.8 L13.4 20.2 C14.8 19.2 16.4 19.2 17.8 20.2 L29.6 28.8" fill="none" stroke="#8d949a" stroke-width="0.8"/>
<path d="M1.6 13.6 L12 21 M29.6 13.6 L19.2 21" fill="none" stroke="#c2c7cb" stroke-width="0.7"/>
</svg></div>
<div class="t" style="left:282.0px;top:468.00px;font-size:13px;color:#0b6ec1;letter-spacing:-0.084px;text-decoration:underline;">Websites sichern</div>
<div class="ic32" style="left:244px;top:465px"><svg width="32" height="32" viewBox="0 0 32 32">
<rect x="1.6" y="1.6" width="28.8" height="24.4" rx="2" fill="#d8a85a" stroke="#8c6432" stroke-width="1"/>
<rect x="4" y="3.8" width="24.2" height="20" fill="#ffffff"/>
<g fill="#6a6e72"><rect x="12" y="7.6" width="1.6" height="0.9"/><rect x="14.6" y="7.6" width="0.8" height="0.9"/><rect x="16.4" y="7.6" width="3.4" height="0.9"/>
<rect x="7" y="11.5" width="2.8" height="0.9"/><rect x="11" y="11.5" width="3.4" height="0.9"/><rect x="15.4" y="11.5" width="0.8" height="0.9"/><rect x="17.2" y="11.5" width="4.2" height="0.9"/><rect x="22.4" y="11.5" width="1.8" height="0.9"/>
<rect x="7" y="13.6" width="0.8" height="0.9"/><rect x="9" y="13.6" width="3.4" height="0.9"/><rect x="13.6" y="13.6" width="0.8" height="0.9"/><rect x="15.6" y="13.6" width="3.4" height="0.9"/><rect x="20" y="13.6" width="4.2" height="0.9"/>
<rect x="7" y="16.6" width="2.8" height="0.9"/><rect x="11" y="16.6" width="3.4" height="0.9"/></g>
<path d="M7 20.4 L9 18 L8.6 20 L11 19 L16 20.4 L10.6 21.6 Z" fill="#8a4cf0" opacity="0.85"/>
<path d="M20.6 21.4 L19.8 26.4 M23.4 21.4 L24.2 26.4" stroke="#b8283a" stroke-width="1"/>
<circle cx="22" cy="19.6" r="2.9" fill="#e0707e" stroke="#b8283a" stroke-width="0.9"/>
</svg></div>
<div class="t" style="left:609.0px;top:468.00px;font-size:13px;color:#0b6ec1;letter-spacing:-0.111px;text-decoration:underline;">Passwortgeschützte Verzeichnisse</div>
<div class="ic32" style="left:571px;top:465px"><svg width="32" height="32" viewBox="0 0 32 32"><defs><linearGradient id="gfold32" x1="0" y1="0" x2="0" y2="1"><stop offset="0" stop-color="#f7dc8e"/><stop offset="1" stop-color="#e8b85e"/></linearGradient>
<linearGradient id="gpap" x1="0" y1="0" x2="0" y2="1"><stop offset="0" stop-color="#ffffff"/><stop offset="1" stop-color="#c9cfd6"/></linearGradient></defs><g transform="translate(-0.5 0)">
<path d="M1.5 4.6 C1.5 3.4 2.3 2.6 3.4 2.6 H13.2 C14.2 2.6 14.8 3.4 14.8 4 H27.6 C28.8 4 29.6 4.8 29.6 6 V26.4 C29.6 27.6 28.8 28.4 27.6 28.4 H3.4 C2.3 28.4 1.5 27.6 1.5 26.4Z" fill="#c98a1f" stroke="#a46810" stroke-width="0.9"/>
<rect x="4.3" y="4.6" width="23.6" height="10" fill="url(#gpap)"/>
<path d="M1.5 12.2 H12.6 C13.4 12.2 13.6 10.4 14.6 10.4 H29.6 V26.4 C29.6 27.6 28.8 28.4 27.6 28.4 H3.4 C2.3 28.4 1.5 27.6 1.5 26.4Z" fill="url(#gfold32)" stroke="#a46810" stroke-width="0.9"/>
</g>
<path d="M12.8 17.6 V15.6 C12.8 13.6 14 12.6 15.7 12.6 C17.4 12.6 18.6 13.6 18.6 15.6 V17.6" fill="none" stroke="#8a5a12" stroke-width="1.7"/>
<rect x="11.2" y="17.2" width="9" height="7" rx="1.2" fill="#8a5a12"/>
<rect x="15.1" y="19" width="1.2" height="3.6" fill="#e6b85f"/>
</svg></div>
<div class="t" style="left:935.0px;top:468.00px;font-size:13px;color:#0b6ec1;letter-spacing:0.051px;text-decoration:underline;">Kopieren der Website</div>
<div class="ic32" style="left:897px;top:465px"><svg width="32" height="32" viewBox="0 0 32 32">
<path d="M11 3.2 C11 2 11.8 1.2 13 1.2 H24.6 L29.8 6.4 V21.4 C29.8 22.6 29 23.4 27.8 23.4 H13 C11.8 23.4 11 22.6 11 21.4Z" fill="#e4e8ee" stroke="#6cb51f" stroke-width="1.6"/>
<path d="M24.4 1.4 V6.6 H29.6" fill="#fff" stroke="#6cb51f" stroke-width="0.9"/>
<path d="M1.2 10.2 C1.2 9 2 8.2 3.2 8.2 H14.6 L19.6 13.2 V28.6 C19.6 29.8 18.8 30.6 17.6 30.6 H3.2 C2 30.6 1.2 29.8 1.2 28.6Z" fill="#e4e9ef" stroke="#4f8fbf" stroke-width="1.6"/>
<path d="M14.4 8.4 V13.4 H19.4" fill="#fff" stroke="#4f8fbf" stroke-width="0.9"/>
</svg></div>
<div class="t" style="left:282.0px;top:521.00px;font-size:13px;color:#0b6ec1;letter-spacing:0.217px;text-decoration:underline;">Protokolldateien</div>
<div class="ic32" style="left:244px;top:518px"><svg width="32" height="32" viewBox="0 0 32 32">
<defs><linearGradient id="glog" x1="0" y1="0" x2="0" y2="1"><stop offset="0" stop-color="#f2f5f7"/><stop offset="1" stop-color="#dfe5ea"/></linearGradient></defs>
<path d="M4.4 2.6 C4.4 1.7 5 1.1 5.9 1.1 H21.6 L27.8 7.3 V27.1 C27.8 28 27.2 28.6 26.3 28.6 H5.9 C5 28.6 4.4 28 4.4 27.1Z" fill="url(#glog)" stroke="#6f777d" stroke-width="1"/>
<path d="M21.6 1.2 V7.4 H27.7" fill="#fbfbfb" stroke="#6f777d" stroke-width="0.9"/>
<g fill="#6f777d"><circle cx="10.5" cy="6.4" r="0.75"/><circle cx="10.5" cy="9.4" r="0.75"/><circle cx="10.5" cy="12.4" r="0.75"/><circle cx="10.5" cy="15.4" r="0.75"/><circle cx="10.5" cy="18.4" r="0.75"/><circle cx="10.5" cy="21.4" r="0.75"/></g>
<g stroke="#8b9297" stroke-width="0.9"><path d="M12 6.4 H17.8 M12 9.4 H17.8 M12 12.4 H22.1 M12 15.4 H22.1 M12 18.4 H22.1 M12 21.4 H22.1"/></g>
</svg></div>
<div class="t" style="left:609.0px;top:521.00px;font-size:13px;color:#0b6ec1;letter-spacing:-0.003px;text-decoration:underline;">Webnutzer</div>
<div class="ic32" style="left:571px;top:518px"><svg width="32" height="32" viewBox="0 0 32 32">
<defs><radialGradient id="gwu" cx="0.35" cy="0.3" r="0.8"><stop offset="0" stop-color="#d4ebfb"/><stop offset="1" stop-color="#5b9bd0"/></radialGradient>
<linearGradient id="gbody" x1="0" y1="0" x2="0" y2="1"><stop offset="0" stop-color="#5ab9ea"/><stop offset="1" stop-color="#2a8ccc"/></linearGradient></defs>
<circle cx="11.2" cy="12.4" r="11" fill="url(#gwu)" stroke="#3f7fb5" stroke-width="0.9"/>
<path d="M9 4 C8 8 8 12 9 15 M9 15 L4 17.5 M9 15 L9.5 23 M9 15 L16 10 M9 15 L16 17" stroke="#eaf4fc" stroke-width="0.9" fill="none"/>
<circle cx="9" cy="15" r="1.8" fill="none" stroke="#eaf4fc" stroke-width="0.9"/>
<path d="M8.2 29 C8.2 24.6 12 22.8 19.4 22.8 C26.8 22.8 30.6 24.6 30.6 29 C30.6 30.2 29.6 30.4 19.4 30.4 C9.2 30.4 8.2 30.2 8.2 29Z" fill="url(#gbody)" stroke="#1d6aa5" stroke-width="0.8"/>
<rect x="17.6" y="20" width="3.6" height="3.4" fill="#e2a98a"/>
<path d="M15.4 15 C15.4 11 17 9.2 19.4 9.2 C21.8 9.2 23.4 11 23.4 15 C23.4 19.5 21.6 21.8 19.4 21.8 C17.2 21.8 15.4 19.5 15.4 15Z" fill="#f2cdb5" stroke="#b47a55" stroke-width="0.6"/>
<path d="M15.3 15 C15 10.6 16.8 9 19.4 9 C22 9 23.8 10.6 23.5 15 C23 12.6 22 12 19.4 11.8 C16.8 12 15.8 12.6 15.3 15Z" fill="#94532a"/>
</svg></div>
<div class="t" style="left:282.0px;top:326.44px;font-size:12px;color:#333;letter-spacing:-0.134px;">PHP-Version: 5.6</div>
<div class="r" style="left:1243px;top:82px;width:228px;height:570px;background:#eff2f5;border:1px solid #c4ced6;border-radius:4px;"></div>
<div class="t" style="left:1304.2px;top:110.64px;font-size:12px;color:#0b6ec1;letter-spacing:-0.256px;text-decoration:underline;">Backup-Manager</div>
<div class="ic22" style="left:1275px;top:107px"><svg width="22" height="22" viewBox="0 0 22 22">
<defs><linearGradient id="gbk" x1="0" y1="0" x2="0" y2="1"><stop offset="0" stop-color="#d6ebf9"/><stop offset="1" stop-color="#a9cfeb"/></linearGradient></defs>
<path d="M2.6 2.2 C2.8 1.4 3.4 1 4.2 1 H17.8 C18.6 1 19.2 1.4 19.4 2.2 L21.2 14.6 H0.8Z" fill="url(#gbk)" stroke="#5b88ad" stroke-width="0.8"/>
<path d="M0.8 14.6 H21.2 V20 C21.2 21 20.6 21.6 19.6 21.6 H2.4 C1.4 21.6 0.8 21 0.8 20Z" fill="#c9ced2" stroke="#6f767c" stroke-width="0.8"/>
<rect x="2.8" y="17.4" width="6.4" height="1.6" fill="#5e6469"/>
<circle cx="17.8" cy="18.2" r="1.1" fill="#5fd12a"/>
<path d="M6.6 5.6 C7.8 3.6 10 2.8 12 3 C14.8 3.4 16.6 5.8 16.4 8.6 C16.2 11.4 13.8 13.4 11 13.2 C9.6 13.1 8.4 12.4 7.6 11.4" fill="none" stroke="#21669c" stroke-width="1.7"/>
<path d="M3.4 5.4 L9.6 4.6 L7.2 10.2Z" fill="#21669c"/>
</svg></div>
<div class="t" style="left:1304.2px;top:147.84px;font-size:12px;color:#0b6ec1;letter-spacing:-0.172px;text-decoration:underline;">Datenbanken</div>
<div class="ic22" style="left:1275px;top:144px"><svg width="22" height="22" viewBox="0 0 22 22"><g transform="translate(-0.2 -0.6) scale(0.71)">
<defs><linearGradient id="gdb2" x1="0" y1="0" x2="1" y2="0"><stop offset="0" stop-color="#c4c9ce"/><stop offset="0.35" stop-color="#f4f6f8"/><stop offset="0.7" stop-color="#e1e5e9"/><stop offset="1" stop-color="#b4babf"/></linearGradient></defs>
<path d="M2.4 5.2 V25.8 C2.4 28.6 8.6 30.6 16 30.6 C23.4 30.6 29.6 28.6 29.6 25.8 V6Z" fill="url(#gdb2)" stroke="#8f969c" stroke-width="0.9"/>
<ellipse cx="16" cy="5.2" rx="13.6" ry="4" fill="#e3e6e9" stroke="#8f969c" stroke-width="0.9"/>
<ellipse cx="17" cy="5.6" rx="8" ry="2" fill="#f6f7f8"/>
<path d="M2.4 13 C2.4 16 8.6 17.4 16 17.4 C23.4 17.4 29.6 16 29.6 13" fill="none" stroke="#2f78b8" stroke-width="1.6"/>
<path d="M2.4 20.6 C2.4 23.6 8.6 25 16 25 C23.4 25 29.6 23.6 29.6 20.6" fill="none" stroke="#2f78b8" stroke-width="1.6"/>
</g></svg></div>
<div class="t" style="left:1304.2px;top:184.64px;font-size:12px;color:#0b6ec1;letter-spacing:-0.021px;text-decoration:underline;">Geplante Aufgaben</div>
<div class="ic22" style="left:1275px;top:181px"><svg width="22" height="22" viewBox="0 0 22 22">
<rect x="1.2" y="3" width="19.6" height="18.6" rx="1.4" fill="#fbfbfb" stroke="#7f868c" stroke-width="0.9"/>
<path d="M1.2 8 V4.4 C1.2 3.6 1.8 3 2.6 3 H19.4 C20.2 3 20.8 3.6 20.8 4.4 V8Z" fill="#e8633a" stroke="#b5451f" stroke-width="0.7"/>
<rect x="4.6" y="0.8" width="1.4" height="4" rx="0.6" fill="#bfc4c8" stroke="#777" stroke-width="0.4"/>
<rect x="15.8" y="0.8" width="1.4" height="4" rx="0.6" fill="#bfc4c8" stroke="#777" stroke-width="0.4"/>
<g fill="#e2e5e8"><rect x="4" y="10.2" width="2.4" height="2"/><rect x="7.4" y="10.2" width="2.4" height="2"/><rect x="10.8" y="10.2" width="2.4" height="2"/><rect x="14.2" y="10.2" width="2.4" height="2"/>
<rect x="4" y="13.2" width="2.4" height="2"/><rect x="7.4" y="13.2" width="2.4" height="2"/><rect x="10.8" y="13.2" width="2.4" height="2"/><rect x="14.2" y="13.2" width="2.4" height="2"/>
<rect x="4" y="16.2" width="2.4" height="2"/><rect x="7.4" y="16.2" width="2.4" height="2"/></g>
<rect x="10.6" y="15.8" width="3.2" height="2.8" fill="#fff" stroke="#d9443a" stroke-width="1"/>
</svg></div>
<div class="t" style="left:1304.2px;top:221.84px;font-size:12px;color:#0b6ec1;letter-spacing:-0.346px;text-decoration:underline;">WordPress&nbsp;</div>
<div class="ic22" style="left:1275px;top:218px"><svg width="22" height="22" viewBox="0 0 22 22">
<circle cx="11" cy="11.6" r="10.6" fill="#5396cd"/>
<circle cx="11" cy="11.6" r="9.2" fill="#f3f6f9"/>
<circle cx="11" cy="11.6" r="8.4" fill="#5396cd"/>
<path d="M4.2 8 L8 18.6 L10.4 12.2 L9 8 M9.3 8 L13.4 18.8 L16.4 10 C16.8 8.4 16.4 7.6 15.8 7 M7.6 7.8 H12.8" fill="none" stroke="#fff" stroke-width="1.5"/>
</svg></div>
<div class="t" style="left:1304.2px;top:258.84px;font-size:12px;color:#0b6ec1;letter-spacing:-0.129px;text-decoration:underline;">Postausgangskontrolle</div>
<div class="ic22" style="left:1275px;top:256px"><svg width="22" height="22" viewBox="0 0 22 22"><g transform="scale(0.69)"><defs><linearGradient id="gred2" x1="0" y1="0" x2="0" y2="1"><stop offset="0" stop-color="#fbb59b"/><stop offset="1" stop-color="#ec6b43"/></linearGradient></defs>
<path d="M1.2 13 L13.2 2 C14.5 0.9 16.9 0.9 18.2 2 L30 13 V28.4 C30 29.4 29.3 30 28.3 30 H2.9 C1.9 30 1.2 29.4 1.2 28.4Z" fill="#f7f8f9" stroke="#7b8288" stroke-width="1"/>
<path d="M5.2 12.6 L14.2 4.2 C15 3.5 16.3 3.5 17.1 4.2 L26.2 12.6 L18 20.4 C16.5 21.6 14.8 21.6 13.4 20.4Z" fill="#a9c6de"/>
<path d="M2.1 14 L13.5 22 C14.8 22.9 16.4 22.9 17.7 22 L29.1 14 V29.2 H2.1Z" fill="#f0d8cf"/>
<path d="M5.2 6.4 H26.2 V13.6 L18.2 20.6 C16.4 21.8 14.9 21.8 13.2 20.6 L5.2 13.6Z" fill="url(#gred2)" stroke="#b43a17" stroke-width="0.9"/>
<path d="M1.6 28.8 L13.4 20.2 C14.8 19.2 16.4 19.2 17.8 20.2 L29.6 28.8" fill="none" stroke="#8d949a" stroke-width="0.8"/>
<path d="M1.6 13.6 L12 21 M29.6 13.6 L19.2 21" fill="none" stroke="#c2c7cb" stroke-width="0.7"/>
</g></svg></div>
<svg class="r" style="left:1366px;top:219px" width="33" height="19" viewBox="0 0 33 19">
<path d="M8 1.4 H30 C30.8 1.4 31.4 2 31.4 2.8 V15.6 C31.4 16.4 30.8 17 30 17 H8 L1 9.2Z" fill="#9aa4ac" opacity="0.35" transform="translate(0.8 0.8)"/>
<path d="M7.2 0.8 H29.4 C30.2 0.8 30.8 1.4 30.8 2.2 V15.4 C30.8 16.2 30.2 16.8 29.4 16.8 H7.2 L0.8 8.8Z" fill="#e8141e"/>
<text x="18.4" y="13" font-size="11" font-weight="bold" text-anchor="middle" fill="#fff" font-family="Liberation Sans" letter-spacing="-0.3">Neu</text>
</svg>
<div class="r" style="left:1244px;top:298px;width:228px;height:1px;background:#d3dbe2;"></div>
<div class="t" style="left:1254.0px;top:315.80px;font-size:15px;color:#4d555e;letter-spacing:-0.411px;font-weight:bold;-webkit-text-stroke:0;">Ressourcenverbrauch</div>
<svg class="r" style="left:1444px;top:315px" width="18" height="18"><circle cx="9" cy="9" r="9" fill="#dde4ea"/><path d="M5.5 10.5 L9 7 L12.5 10.5" fill="none" stroke="#a4b1bc" stroke-width="1.5"/></svg>
<div class="t" style="left:1254.0px;top:341.74px;font-size:12px;color:#5b636b;letter-spacing:-0.159px;font-weight:bold;-webkit-text-stroke:0;">Speicherplatz: 0%</div>
<div class="r" style="left:1254px;top:358px;width:206px;height:8px;background:linear-gradient(#d5dce3,#e3e8ed);border:1px solid #c6cfd7;border-radius:3px;"></div>
<div class="t" style="left:1254.0px;top:373.59px;font-size:11px;color:#7b8187;letter-spacing:-0.117px;">0.4 MB genutzt von 1 GB</div>
<div class="t" style="left:1254.0px;top:400.04px;font-size:12px;color:#5b636b;letter-spacing:-0.008px;font-weight:bold;-webkit-text-stroke:0;">Traffic: 0%</div>
<div class="r" style="left:1254px;top:416px;width:206px;height:9px;background:linear-gradient(#d5dce3,#e3e8ed);border:1px solid #c6cfd7;border-radius:3px;"></div>
<div class="t" style="left:1254.0px;top:432.19px;font-size:11px;color:#7b8187;letter-spacing:0.012px;">0 MB/Monat genutzt von 50 GB/Monat</div>
<div class="r" style="left:1254px;top:457px;width:208px;height:1px;background:#d8dfe5;"></div>
<div class="t" style="left:1254.0px;top:469.84px;font-size:12px;color:#5d94c0;letter-spacing:0.005px;text-decoration:underline;">Mehr Statistiken anzeigen</div>
<div class="r" style="left:1244px;top:499px;width:228px;height:1px;background:#d3dbe2;"></div>
<div class="t" style="left:1254.5px;top:517.10px;font-size:15px;color:#4d555e;letter-spacing:-0.188px;font-weight:bold;-webkit-text-stroke:0;">Empfohlene Applikationen</div>
<svg class="r" style="left:1444px;top:516px" width="18" height="18"><circle cx="9" cy="9" r="9" fill="#dde4ea"/><path d="M5.5 10.5 L9 7 L12.5 10.5" fill="none" stroke="#a4b1bc" stroke-width="1.5"/></svg>
<div class="r" style="left:1244px;top:550px;width:228px;height:1px;background:#d3dbe2;"></div>
<div class="t" style="left:1254.5px;top:568.30px;font-size:15px;color:#4d555e;letter-spacing:-0.778px;font-weight:bold;-webkit-text-stroke:0;">Domains</div>
<svg class="r" style="left:1444px;top:567px" width="18" height="18"><circle cx="9" cy="9" r="9" fill="#dde4ea"/><path d="M5.5 10.5 L9 7 L12.5 10.5" fill="none" stroke="#a4b1bc" stroke-width="1.5"/></svg>
<div class="ic16" style="left:1254px;top:595px"><svg width="16" height="16" viewBox="0 0 16 16">
<circle cx="8" cy="8" r="6.6" fill="#bfe0f7" stroke="#5a9fd4" stroke-width="1"/>
<text x="8" y="11.8" font-size="10" font-weight="bold" text-anchor="middle" fill="#1d4d8a" font-family="Liberation Sans">R</text>
</svg></div>
<div class="t" style="left:1273.8px;top:597.34px;font-size:12px;color:#0b6ec1;letter-spacing:0.021px;text-decoration:underline;">Domainnamen registrieren</div>
<div class="ic16" style="left:1254px;top:619px"><svg width="16" height="16" viewBox="0 0 16 16">
<path d="M2.2 3.6 C1.2 5.6 2 8 4.2 8.6 C5 8.8 5.8 8.7 6.4 8.4 L12.2 14.4 C12.8 15 13.8 15 14.4 14.4 C15 13.8 15 12.8 14.4 12.2 L8.4 6.4 C8.8 5.4 8.8 4.2 8.2 3.2 C7.4 2 5.9 1.4 4.6 1.6 L6.4 3.6 L5.8 5.6 L3.8 6 Z" fill="#e2e5e8" stroke="#7d858c" stroke-width="0.9"/>
</svg></div>
<div class="t" style="left:1273.8px;top:621.44px;font-size:12px;color:#0b6ec1;letter-spacing:-0.001px;text-decoration:underline;">Domainnamen verwalten</div>
<div class="r" style="left:1493px;top:0px;width:1px;height:746px;background:#e4e4e4;"></div>
</body></html>
